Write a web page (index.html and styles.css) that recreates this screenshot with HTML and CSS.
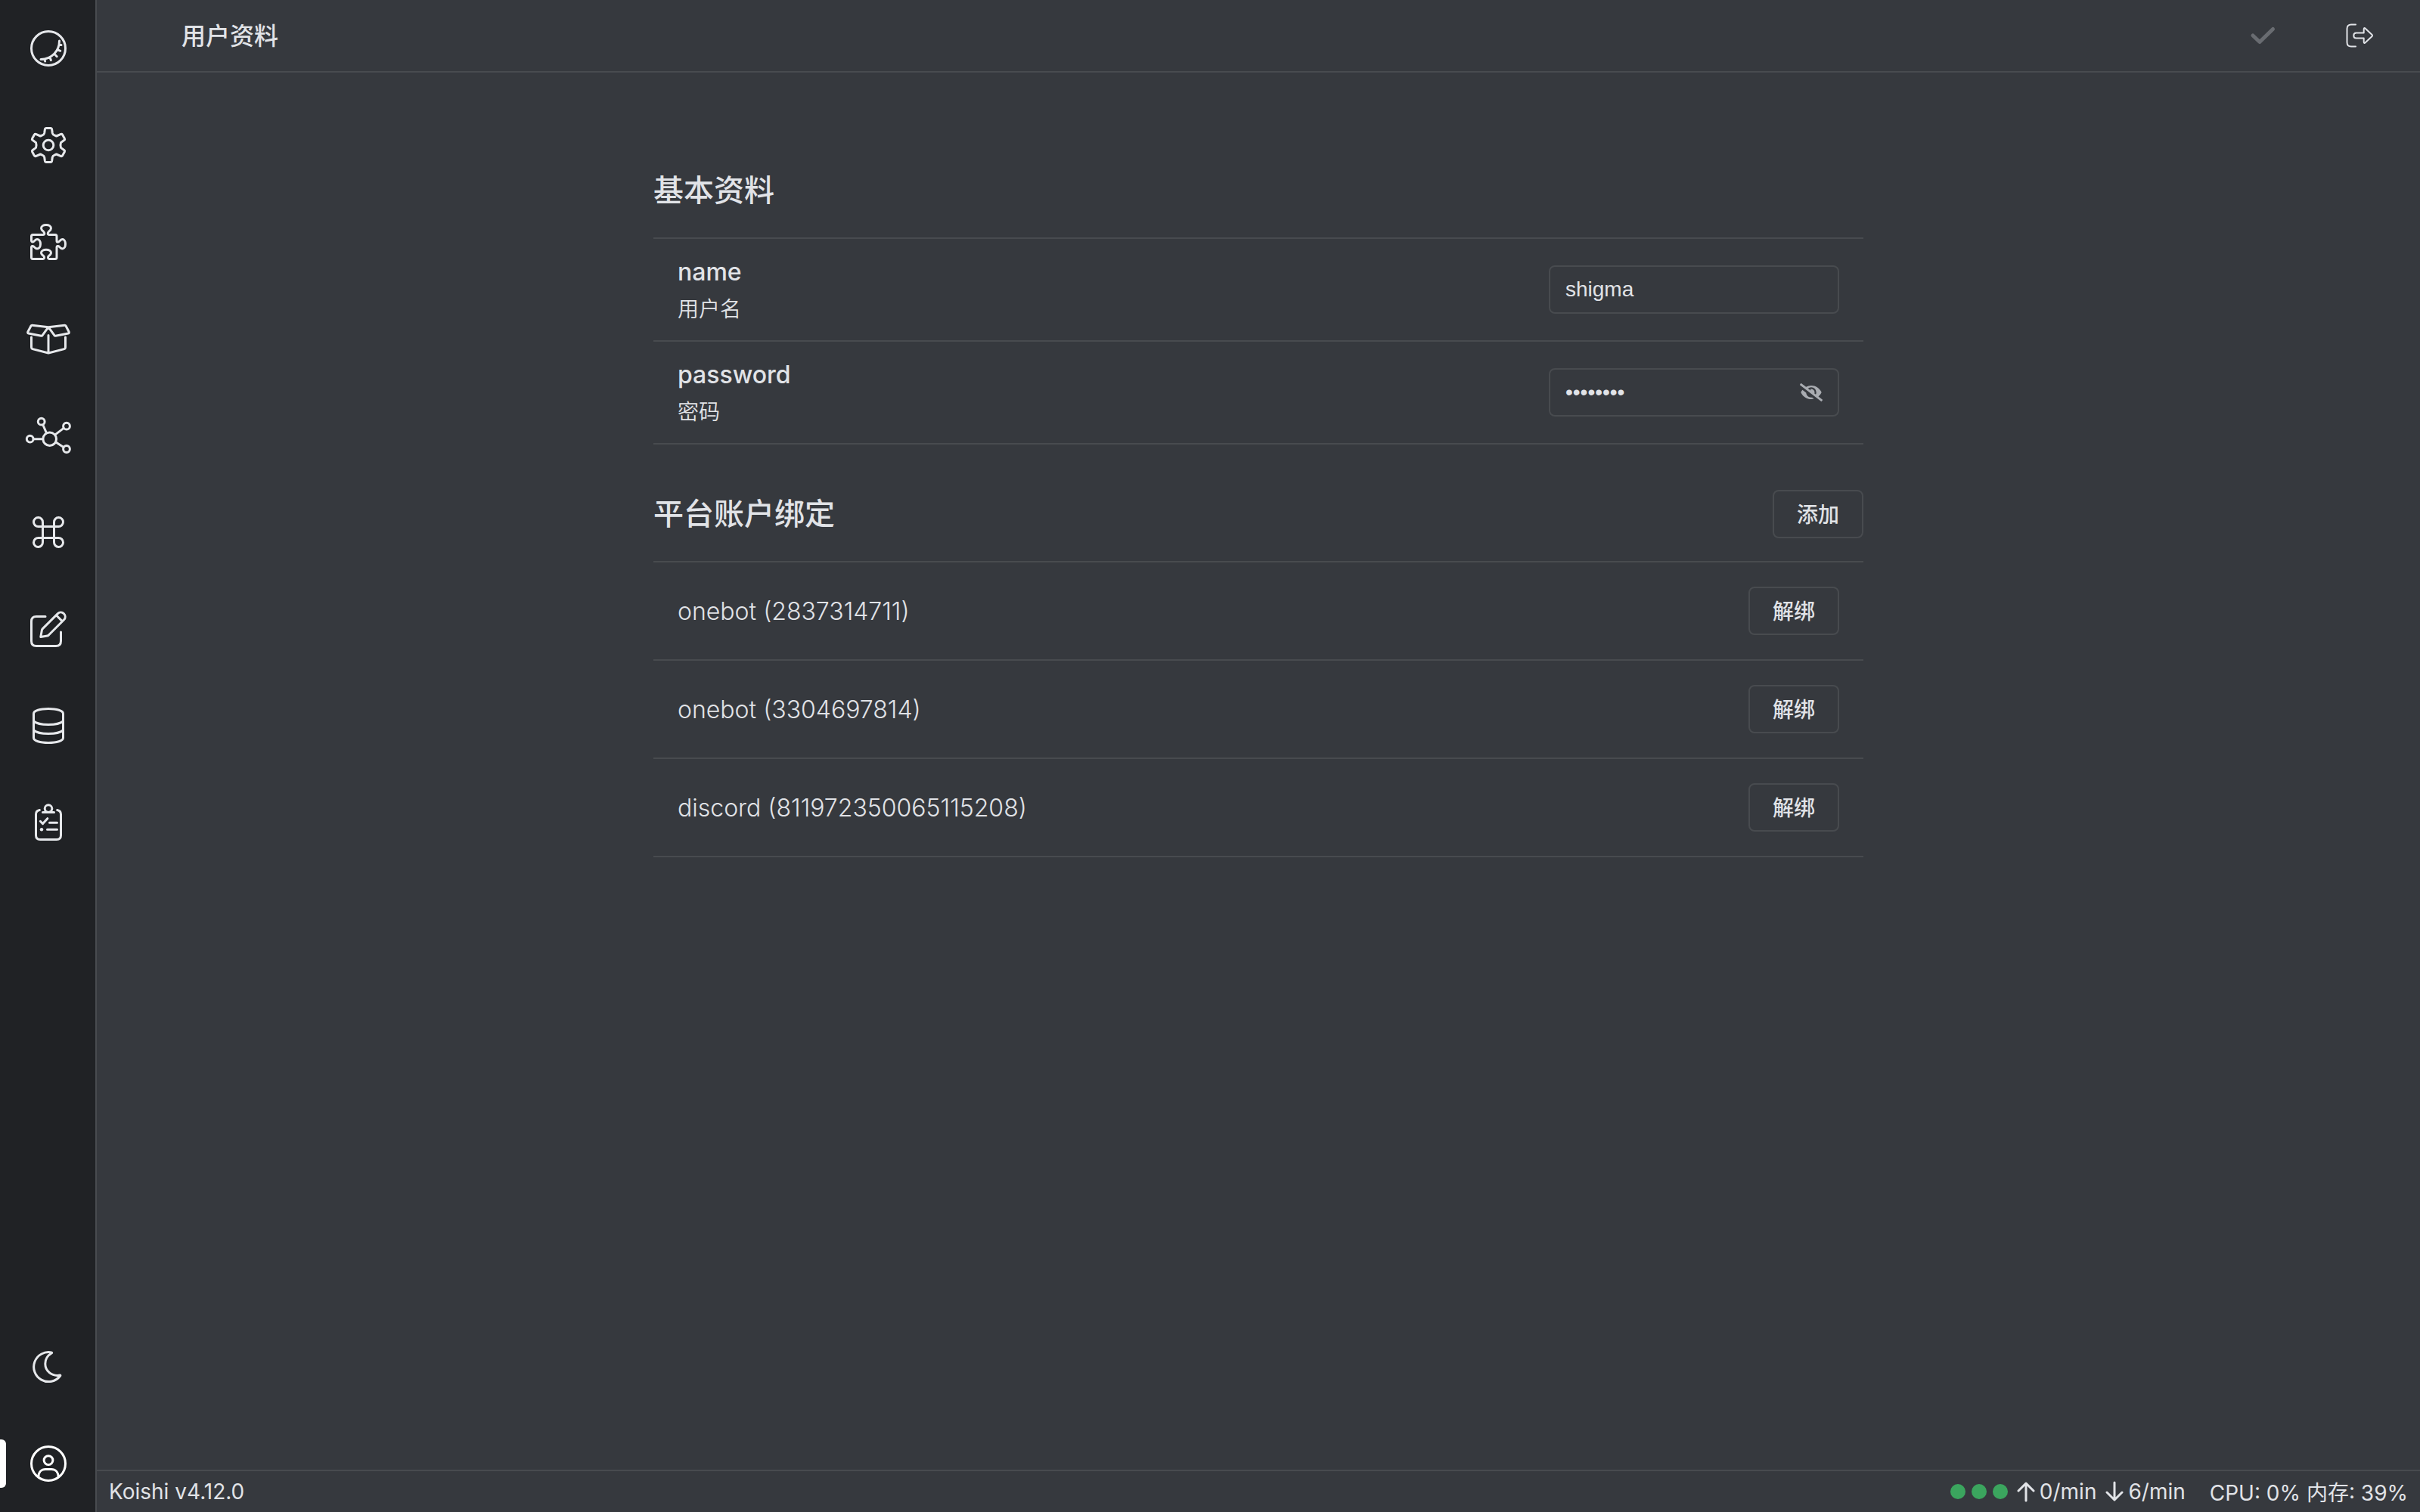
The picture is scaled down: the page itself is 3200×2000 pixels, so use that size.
FILE: index.html
```html
<!DOCTYPE html>
<html lang="zh-CN">
<head>
<meta charset="utf-8">
<meta name="viewport" content="width=device-width, initial-scale=1">
<title>用户资料</title>
<link rel="stylesheet" href="styles.css">
</head>
<body>
<div class="app">
  <nav class="sidebar" aria-label="导航">
    <div class="nav-group">
      <a class="nav-item" href="#home" aria-label="首页">
        <svg class="icon" viewBox="0 0 64 64"><circle cx="32" cy="32" r="22.5"/><path d="M46.5 22C46.5 35 37 46 22 46.5M46 27.5L49 27.5M44.5 34L47.8 35.3M40 39.5L43.2 42.7M34 44L35.4 47.6M27.6 46L27.6 49"/></svg>
      </a>
      <a class="nav-item" href="#settings" aria-label="插件配置">
        <svg class="icon" viewBox="0 0 64 64"><circle cx="32" cy="32" r="6.8"/><path d="M29.2 9.5H34.8Q36.3 9.5 36.6 11L37.3 16Q37.8 18.2 40 18.9L42.6 20L48.6 17.4Q49.8 17 50.5 18L53.4 23.2Q54 24.4 53 25.3L48.5 28.6Q47.4 32 48.5 35.4L53 38.7Q54 39.6 53.4 40.8L50.5 46Q49.8 47 48.6 46.6L42.6 44L40 45.1Q37.8 45.8 37.3 48L36.6 53Q36.3 54.5 34.8 54.5H29.2Q27.7 54.5 27.4 53L26.7 48Q26.2 45.8 24 45.1L21.4 44L15.4 46.6Q14.2 47 13.5 46L10.6 40.8Q10 39.6 11 38.7L15.5 35.4Q16.6 32 15.5 28.6L11 25.3Q10 24.4 10.6 23.2L13.5 18Q14.2 17 15.4 17.4L21.4 20L24 18.9Q26.2 18.2 26.7 16L27.4 11Q27.7 9.5 29.2 9.5Z"/></svg>
      </a>
      <a class="nav-item" href="#plugins" aria-label="插件">
        <svg class="icon" viewBox="0 0 64 64"><path d="M11.5 22.5H25C27.5 22.5 27 19.5 25.5 18.3C24 17.2 22.5 16 22.5 14C22.5 11.3 25.3 9.5 29 9.5S35.5 11.3 35.5 14C35.5 16 34 17.2 32.5 18.3C31 19.5 30.5 22.5 33 22.5H41Q43 22.5 43 24.5V30.5C43 33 45.5 32.5 46.5 31.2C47.5 30 48.5 28.5 50.5 28.5C52.7 28.5 54.5 31 54.5 34.7S52.7 41 50.5 41C48.5 41 47.5 39.7 46.5 38.5C45.3 37.2 43 37 43 39.5V52.5Q43 54.5 41 54.5H33.5C31 54.5 31 51.5 32.5 50.5C34 49.5 35.5 48.2 35.5 46.3C35.5 44 32.7 42.3 29 42.3S22.5 44 22.5 46.3C22.5 48.2 24 49.5 25.5 50.5C27 51.5 27 54.5 24.5 54.5H11.5Q9.5 54.5 9.5 52.5V39.5C9.5 37 12 37.2 13 38.5C14 39.7 15 41 17 41C19.5 41 21.5 38.5 21.5 34.7S19.5 28.5 17 28.5C15 28.5 14 30 13 31.2C12 32.5 9.5 32.5 9.5 30V24.5Q9.5 22.5 11.5 22.5Z"/></svg>
      </a>
      <a class="nav-item" href="#market" aria-label="插件市场">
        <svg class="icon" viewBox="0 0 64 64"><path d="M9 15L4.8 23Q4.2 24.6 5.8 25L22.4 28.2Q23.6 28.4 24.2 27.4L32 16.7L10.5 14.2Q9.4 14.2 9 15ZM55 15L59.2 23Q59.8 24.6 58.2 25L41.6 28.2Q40.4 28.4 39.8 27.4L32 16.7L53.5 14.2Q54.6 14.2 55 15ZM9.5 30V43.6Q9.5 45.2 11 45.6L32 51L53 45.6Q54.5 45.2 54.5 43.6V30M32 27.5V51"/></svg>
      </a>
      <a class="nav-item" href="#network" aria-label="依赖图">
        <svg class="icon" viewBox="0 0 64 64"><circle cx="33.7" cy="36.7" r="8.8"/><circle cx="22.7" cy="13.7" r="4.4"/><circle cx="56" cy="19.7" r="4.4"/><circle cx="56" cy="50" r="4.4"/><circle cx="7.7" cy="36.7" r="4.4"/><path d="M24.8 18L29.4 28.6M52.2 22.4L41.4 30.6M52 47.4L41.6 40.8M12.2 36.7H24.6"/></svg>
      </a>
      <a class="nav-item" href="#commands" aria-label="指令">
        <svg class="icon" viewBox="0 0 64 64"><path d="M24.5 24.5V18.7A6 6 0 1 0 18.7 24.5H45.3A6 6 0 1 0 39.5 18.7V45.3A6 6 0 1 0 45.3 39.5H18.7A6 6 0 1 0 24.5 45.3Z"/></svg>
      </a>
      <a class="nav-item" href="#editor" aria-label="编辑">
        <svg class="icon" viewBox="0 0 64 64"><path d="M28 15.5H16Q9.5 15.5 9.5 22V48Q9.5 54.5 16 54.5H42Q48.5 54.5 48.5 48V36M21.8 42.6L23.4 33.4Q23.6 32.4 24.4 31.6L44.4 11.6A5.8 5.8 0 0 1 52.6 19.8L32.4 40Q31.8 40.8 30.8 41ZM42.6 14L50.2 21.6"/></svg>
      </a>
      <a class="nav-item" href="#database" aria-label="数据库">
        <svg class="icon" viewBox="0 0 64 64"><path d="M12.5 16C12.5 12 21 9.5 32 9.5S51.5 12 51.5 16V48C51.5 52 43 54.5 32 54.5S12.5 52 12.5 48ZM12.5 26C16 29 23 30.5 32 30.5S48 29 51.5 26M12.5 38C16 41 23 42.5 32 42.5S48 41 51.5 38"/></svg>
      </a>
      <a class="nav-item" href="#logs" aria-label="日志">
        <svg class="icon" viewBox="0 0 64 64"><path d="M20.3 15.5Q15.5 16.5 15.5 21V49Q15.5 54.5 21 54.5H43Q48.5 54.5 48.5 49V21Q48.5 16.5 43.7 15.5M24.5 18.5H39.5M21.3 30.3L24.6 33.6L30.8 26.7M33.5 32.3H43.5M30.5 41.3H43.5"/><circle cx="32" cy="13.6" r="4.8"/><circle class="dot" cx="23" cy="41.2" r="2.2"/></svg>
      </a>
    </div>
    <div class="nav-group">
      <button class="nav-item" type="button" aria-label="切换主题">
        <svg class="icon" viewBox="0 0 64 64"><path d="M36.2 13A19.5 19.5 0 1 0 47.6 44Q48.4 43.2 47.2 43.1C36 45 27.8 37 27.8 28C27.8 21.5 31 17 36.4 13.8Q37 13.1 36.2 13Z"/></svg>
      </button>
      <a class="nav-item active" href="#profile" aria-label="用户资料" aria-current="page">
        <svg class="icon" viewBox="0 0 64 64"><circle cx="32" cy="32" r="22.5"/><circle cx="32" cy="27.6" r="5.9"/><path d="M18.8 49.4C19 43 23 39.5 28 39.5H36C41 39.5 45 43 45.2 49.4"/></svg>
      </a>
    </div>
  </nav>

  <div class="page">
    <header class="topbar">
      <h1 class="title">用户资料</h1>
      <div class="actions">
        <button class="action" type="button" disabled aria-label="保存">
          <svg class="action-icon check" viewBox="0 0 48 48"><path d="M11 24L20 32.5L37.5 15.5"/></svg>
        </button>
        <button class="action" type="button" aria-label="退出登录">
          <svg class="action-icon" viewBox="0 0 48 48"><path d="M19 9.5H13Q7.5 9.5 7.5 15V33Q7.5 38.5 13 38.5H19M19.5 20.5H29.7V16Q29.7 13 31.8 14.8L40.6 23Q41.6 24 40.6 25L31.8 33.2Q29.7 35 29.7 32V27.5H19.5Q16.3 27.5 16.3 24T19.5 20.5Z"/></svg>
        </button>
      </div>
    </header>

    <main class="content">
      <div class="container">
        <section class="section">
          <div class="section-head"><h2 class="heading">基本资料</h2></div>
          <div class="row">
            <label class="field-label" for="name"><span class="field-name">name</span><span class="field-desc">用户名</span></label>
            <div class="field"><input class="input" id="name" type="text" value="shigma"></div>
          </div>
          <div class="row">
            <label class="field-label" for="password"><span class="field-name">password</span><span class="field-desc">密码</span></label>
            <div class="field">
              <input class="input" id="password" type="password" value="password">
              <button class="reveal" type="button" aria-label="显示密码">
                <svg class="reveal-icon" viewBox="0 0 640 512"><path d="M320 400c-75.85 0-137.25-58.71-142.9-133.11L72.2 185.82c-13.79 17.3-26.48 35.59-36.72 55.59a32.35 32.35 0 0 0 0 29.19C89.71 376.41 197.07 448 320 448c26.91 0 52.87-4 77.89-10.46L346 397.39a144.13 144.13 0 0 1-26 2.61zm313.82 58.1l-110.55-85.44a331.25 331.25 0 0 0 81.25-102.07 32.35 32.35 0 0 0 0-29.19C550.29 135.59 442.93 64 320 64a308.15 308.15 0 0 0-147.32 37.7L45.46 3.37A16 16 0 0 0 23 6.18L3.37 31.45A16 16 0 0 0 6.18 53.9l588.36 454.73a16 16 0 0 0 22.46-2.81l19.64-25.27a16 16 0 0 0-2.82-22.45zm-183.72-142l-39.3-30.38A94.75 94.75 0 0 0 416 256a94.76 94.76 0 0 0-121.31-92.21A47.65 47.65 0 0 1 304 192a46.64 46.64 0 0 1-1.54 10l-73.61-56.89A142.31 142.31 0 0 1 320 112a143.92 143.92 0 0 1 144 144c0 21.63-5.29 41.79-13.9 60.11z"/></svg>
              </button>
            </div>
          </div>
        </section>

        <section class="section">
          <div class="section-head"><h2 class="heading">平台账户绑定</h2><button class="button" type="button">添加</button></div>
          <ul class="bindings">
            <li class="binding"><span>onebot (2837314711)</span><button class="button" type="button">解绑</button></li>
            <li class="binding"><span>onebot (3304697814)</span><button class="button" type="button">解绑</button></li>
            <li class="binding"><span>discord (811972350065115208)</span><button class="button" type="button">解绑</button></li>
          </ul>
        </section>
      </div>
    </main>

    <footer class="statusbar">
      <span>Koishi v4.12.0</span>
      <div class="status">
        <span class="bots"><i class="bot"></i><i class="bot"></i><i class="bot"></i></span>
        <span class="rate"><svg class="arrow" viewBox="0 0 24 28"><path d="M12 26V3M2 13L12 3L22 13"/></svg>0/min</span>
        <span class="rate"><svg class="arrow" viewBox="0 0 24 28"><path d="M12 2V25M2 15L12 25L22 15"/></svg>6/min</span>
        <span class="load">CPU: 0% 内存: 39%</span>
      </div>
    </footer>
  </div>
</div>
</body>
</html>
```
FILE: styles.css
```css
:root {
  --bg: #36393e;
  --bg-side: #202225;
  --border: #484b4f;
  --fg: #e1e3e7;
  --fg-dim: #a9acb1;
  --green: #3ba55e;
}

* { box-sizing: border-box; }

body {
  margin: 0;
  background: var(--bg);
  color: var(--fg);
  font-family: Inter, "Noto Sans CJK SC", sans-serif;
  font-size: 28px;
}

button {
  font: inherit;
  color: inherit;
  background: none;
  border: 0;
  padding: 0;
}

.app {
  display: flex;
  min-height: 100vh;
}

.sidebar {
  flex: none;
  width: 128px;
  display: flex;
  flex-direction: column;
  justify-content: space-between;
  background: var(--bg-side);
  border-right: 2px solid var(--border);
}

.nav-group {
  display: flex;
  flex-direction: column;
}

.nav-item {
  position: relative;
  display: flex;
  align-items: center;
  height: 128px;
  padding-left: 32px;
  color: #e6e8eb;
}

.nav-item.active { color: #fff; }

.nav-item.active::before {
  content: "";
  position: absolute;
  left: 0;
  top: 32px;
  width: 8px;
  height: 64px;
  border-radius: 0 6px 6px 0;
  background: #fff;
}

.icon {
  width: 64px;
  height: 64px;
  fill: none;
  stroke: currentColor;
  stroke-width: 3;
  stroke-linecap: round;
  stroke-linejoin: round;
}

.icon .dot {
  fill: currentColor;
  stroke: none;
}

.page {
  flex: 1;
  min-width: 0;
  display: flex;
  flex-direction: column;
}

.topbar {
  display: flex;
  align-items: center;
  justify-content: space-between;
  height: 96px;
  padding: 0 16px 0 112px;
  border-bottom: 2px solid var(--border);
}

.title {
  margin: 0;
  padding-top: 2px;
  font-size: 32px;
  font-weight: 500;
  line-height: 48px;
}

.actions { display: flex; }

.action {
  display: flex;
  align-items: center;
  justify-content: center;
  width: 128px;
  height: 94px;
}

.action-icon {
  width: 48px;
  height: 48px;
  fill: none;
  stroke: currentColor;
  stroke-width: 2;
  stroke-linecap: round;
  stroke-linejoin: round;
}

.action-icon.check {
  color: #696c71;
  stroke-width: 5;
}

.content {
  flex: 1;
  padding: 124px 32px 64px;
}

.container {
  max-width: 1600px;
  margin: 0 auto;
}

.section + .section { margin-top: 60px; }

.section-head {
  display: flex;
  align-items: center;
  justify-content: space-between;
  padding-bottom: 30px;
  border-bottom: 2px solid var(--border);
}

.heading {
  margin: 0;
  font-size: 40px;
  font-weight: 500;
  line-height: 64px;
}

.row,
.binding {
  display: flex;
  align-items: center;
  justify-content: space-between;
  border-bottom: 2px solid var(--border);
}

.row { padding: 17px 32px; }

.field-label {
  display: flex;
  flex-direction: column;
  padding-top: 2px;
}

.field-name {
  font-size: 32px;
  font-weight: 500;
  line-height: 50px;
}

.field-desc {
  line-height: 48px;
  font-weight: 350;
}

.field {
  position: relative;
  width: 384px;
}

.input {
  display: block;
  width: 100%;
  height: 64px;
  padding: 0 20px;
  border: 2px solid var(--border);
  border-radius: 8px;
  background: none;
  color: inherit;
  font-family: "Liberation Sans", Arial, sans-serif;
  font-size: 28px;
}

.reveal {
  position: absolute;
  top: 0;
  right: 21px;
  display: flex;
  align-items: center;
  height: 64px;
  color: var(--fg-dim);
}

.reveal-icon {
  width: 32px;
  height: 24px;
  fill: currentColor;
}

.button {
  width: 120px;
  height: 64px;
  padding-bottom: 3px;
  border: 2px solid var(--border);
  border-radius: 8px;
  font-weight: 500;
}

.bindings {
  margin: 0;
  padding: 0;
  list-style: none;
}

.binding {
  padding: 32px;
  font-size: 32px;
  font-weight: 300;
}

.binding .button {
  font-size: 28px;
  font-weight: 500;
}

.statusbar {
  display: flex;
  align-items: center;
  justify-content: space-between;
  height: 56px;
  padding: 0 16px;
  border-top: 2px solid var(--border);
  font-weight: 400;
}

.status,
.bots,
.rate {
  display: flex;
  align-items: center;
}

.status { gap: 12px; }
.bots { gap: 8px; }
.rate { gap: 6px; }
.load { margin-left: 20px; }

.bot {
  width: 20px;
  height: 20px;
  border-radius: 50%;
  background: var(--green);
}

.arrow {
  width: 24px;
  height: 28px;
  fill: none;
  stroke: currentColor;
  stroke-width: 3;
  stroke-linecap: round;
  stroke-linejoin: round;
}
```
